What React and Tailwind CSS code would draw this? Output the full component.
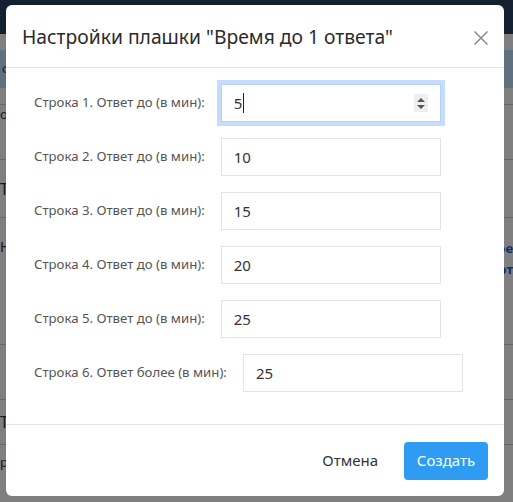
import React from 'react';

const rows = [
    { label: 'Строка 1. Ответ до (в мин):', value: '5', focused: true },
    { label: 'Строка 2. Ответ до (в мин):', value: '10' },
    { label: 'Строка 3. Ответ до (в мин):', value: '15' },
    { label: 'Строка 4. Ответ до (в мин):', value: '20' },
    { label: 'Строка 5. Ответ до (в мин):', value: '25' },
    { label: 'Строка 6. Ответ более (в мин):', value: '25' },
];

const font = { fontFamily: '"Noto Sans", "Open Sans", sans-serif' };

const Field = ({ value, focused }) => (
    <div
        className={
            focused
                ? 'relative w-[228px] h-[46px] -m-1 border-4 border-[#c6dcfc] shrink-0'
                : 'relative w-[220px] h-[38px] shrink-0'
        }
    >
        <div
            className={
                'flex items-center h-full pl-3 text-[15px] text-[#333] bg-white border ' +
                (focused ? 'border-[#b7d0f5]' : 'border-[#e3e3e3]')
            }
        >
            {value}
            {focused && <span className="w-px h-[20px] bg-[#222] ml-px" />}
        </div>
        {focused && (
            <div className="absolute right-[13px] top-[10px] w-[14px] h-[18px] bg-[#efefef] flex flex-col items-center justify-center gap-[3px]">
                <div className="w-0 h-0 border-l-[4px] border-r-[4px] border-b-[4px] border-l-transparent border-r-transparent border-b-[#555]" />
                <div className="w-0 h-0 border-l-[4px] border-r-[4px] border-t-[4px] border-l-transparent border-r-transparent border-t-[#555]" />
            </div>
        )}
    </div>
);

export default function App() {
    return (
        <div className="relative w-full h-[502px] overflow-hidden bg-white" style={font}>
            {/* page behind the dialog */}
            <div className="flex flex-col">
                <div className="h-[34px] bg-[#26405f]" />
                <div className="h-[16px]" />
                <div className="h-[38px] bg-[#bfe3ff] text-[13px] text-[#333] pl-[2px] leading-[38px]">Ф:</div>
                <div className="h-[17px] border-b border-[#ccc]" />
                <div className="h-[55px] border-b border-[#ccc] text-[13px] text-[#333]">о</div>
                <div className="h-[58px] border-b border-[#ccc] text-[16px] text-[#333] leading-[58px]">Т</div>
                <div className="h-[127px] border-b border-[#ccc] text-[14px] text-[#333] pt-[18px]">Н</div>
                <div className="h-[55px] border-b border-[#ccc]" />
                <div className="h-[45px] border-b border-[#ccc] text-[16px] text-[#333] leading-[45px]">Т</div>
                <div className="text-[13px] text-[#333] pt-[8px]">ро</div>
            </div>
            <div className="absolute right-0 top-[238px] text-[13px] font-bold text-[#1d5bd6] leading-[21px] text-right">
                <div>ое</div>
                <div>от</div>
            </div>

            <div className="absolute inset-0 bg-black/50" />

            {/* dialog */}
            <div className="absolute left-[6px] top-[5px] w-[498px] bg-white rounded-[6px] flex flex-col">
                <div className="flex items-center justify-between h-[63px] pl-4 pr-[16px] border-b border-[#e3e3e3]">
                    <h2 className="text-[19.3px] text-[#2b2b2b] leading-none mt-[2px]">Настройки плашки "Время до 1 ответа"</h2>
                    <svg width="14" height="14" viewBox="0 0 14 14" className="mt-[3px]">
                        <path d="M0.5 0.5L13.5 13.5M13.5 0.5L0.5 13.5" stroke="#8a8a8a" strokeWidth="1.5" />
                    </svg>
                </div>

                <div className="flex flex-col pl-7 pt-4 pb-4">
                    {rows.map((r, i) => (
                        <div key={i} className="flex items-center gap-4 h-[38px] mb-4">
                            <span className="text-[13.2px] text-[#555]">{r.label}</span>
                            <Field value={r.value} focused={r.focused} />
                        </div>
                    ))}
                </div>

                <div className="flex items-center justify-end gap-[10px] h-[72px] px-4 border-t border-[#e3e3e3]">
                    <button className="px-4 h-[38px] text-[15px] text-[#333]">Отмена</button>
                    <button className="w-[84px] h-[38px] rounded-[4px] bg-[#2e9cf2] text-white text-[15px]">Создать</button>
                </div>
            </div>
        </div>
    );
}
